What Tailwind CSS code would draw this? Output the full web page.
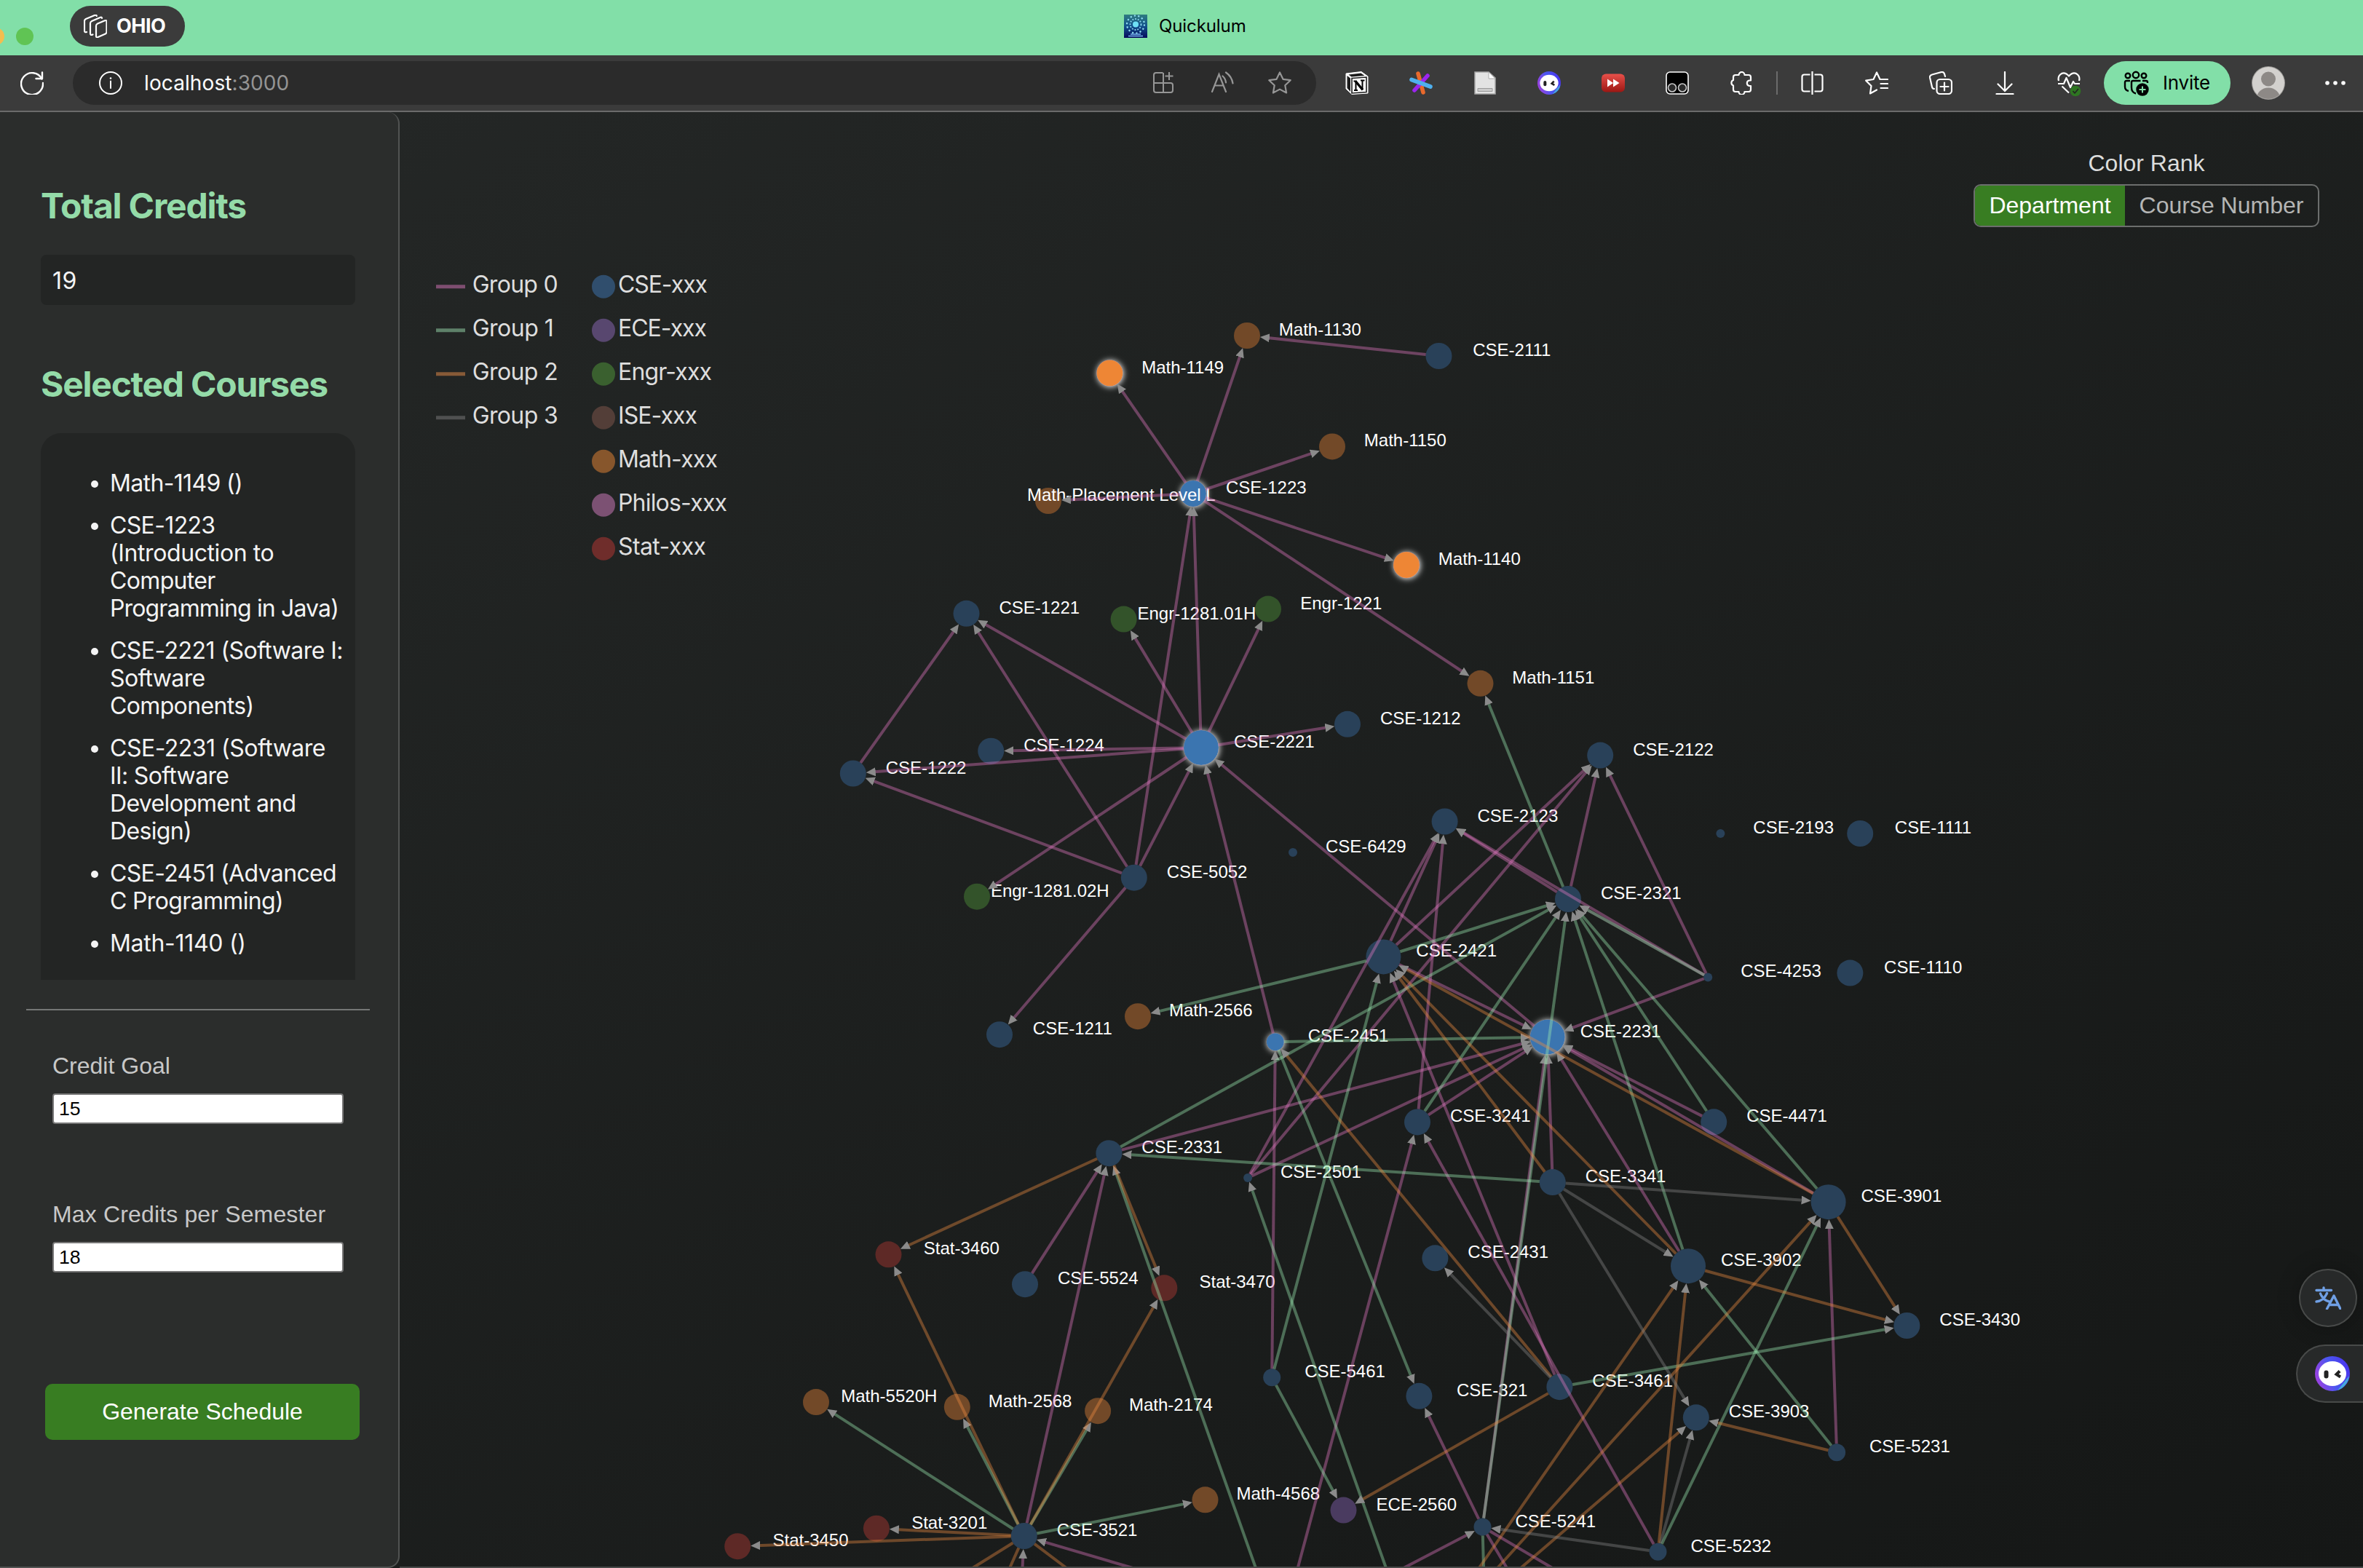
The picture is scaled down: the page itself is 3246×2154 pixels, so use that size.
<!DOCTYPE html>
<html lang="en">
<head>
<meta charset="utf-8">
<title>Quickulum</title>
<script src="https://cdn.jsdelivr.net/npm/@tailwindcss/browser@4"></script>
</head>
<body class="w-[3246px] h-[2154px] overflow-hidden flex flex-col bg-[#1c1d1d] font-['Inter',sans-serif] text-white">

<!-- Title bar -->
<header class="h-[76px] shrink-0 bg-[#82dfa8] flex items-center pb-1 relative">
  <svg class="w-[96px] h-[72px] shrink-0" viewBox="0 0 96 72"><circle cx="-6" cy="50" r="12" fill="#f4bd4f"/><circle cx="34" cy="50" r="12" fill="#60c454"/></svg>
  <div class="w-[158px] h-14 rounded-[28px] bg-[#3b3b3b] flex items-center pl-[19px] gap-[13px]">
    <svg class="w-8 h-8" viewBox="0 0 32 32" fill="none" stroke="#fff" stroke-width="2.2" stroke-linejoin="round" stroke-linecap="round"><path d="M17 15.500q0-2 2-3l10-4.300q2.500-.8 2.500 1.500V24q0 1.500-1.700 2.500L19.500 31Q17 32 17 29.500z"/><path d="M12.500 27.500Q9 29 9 26V12q0-2 2-3l11.500-5q2.300-.9 2.600 1"/><path d="M4 24Q1 25 1 22V9q0-2 2-3L15 1q2.500-1 2.800 1"/></svg>
    <span class="text-[27px] font-bold leading-8 tracking-[-0.5px]">OHIO</span>
  </div>
  <div class="flex items-center gap-4 ml-[1290px] text-black">
    <svg class="w-8 h-8" viewBox="0 0 32 32"><defs><linearGradient id="fav" x1="0" y1="0" x2="0" y2="1"><stop offset="0" stop-color="#2f7d80"/><stop offset=".5" stop-color="#12508c"/><stop offset="1" stop-color="#060a5c"/></linearGradient></defs><rect width="32" height="32" fill="url(#fav)"/><g fill="none" stroke="#8fdcf0"><circle cx="16" cy="13.500" r="12" stroke-width="2.200" stroke-dasharray="2.200 3.200"/><circle cx="16" cy="13.500" r="7.500" stroke-width="1.800" stroke-dasharray="1.800 2"/></g><circle cx="16" cy="13.500" r="4" fill="#6fe0f5"/><path d="M6 29.500h20M9 27h14" stroke="#77b5f0" stroke-width="1.300"/></svg>
    <span class="text-2xl leading-8 tracking-[-0.1px]">Quickulum</span>
  </div>
</header>

<!-- Browser toolbar -->
<nav class="h-[78px] shrink-0 bg-[#3b3b3b] border-b-2 border-[#6b6b6b] flex items-center">
  <svg class="w-8 h-8 ml-7 shrink-0" viewBox="0 0 32 32" fill="none" stroke="#fff" stroke-width="2.400" stroke-linecap="round"><path d="M29.500 10.500A15 15 0 1 0 31 16"/><path d="M30 1.500V10h-8.500" stroke-linejoin="round"/></svg>
  <div class="w-[1708px] h-[60px] ml-10 rounded-[30px] bg-[#2b2b2b] flex items-center pl-9 pr-[34px] shrink-0">
    <svg class="w-8 h-8" viewBox="0 0 32 32" fill="none" stroke="#fff" stroke-width="2"><circle cx="16" cy="16" r="15"/><path d="M16 13.500V23" stroke-linecap="round"/><circle cx="16" cy="9.500" r="1.300" fill="#fff" stroke="none"/></svg>
    <span class="ml-[30px] text-[28px] leading-9 tracking-[0.1px]">localhost<span class="text-[#949494]">:3000</span></span>
    <svg class="w-8 h-8 ml-auto" viewBox="0 0 32 32" fill="none" stroke="#969696" stroke-width="2"><path d="M13.500 2H4a3 3 0 0 0-3 3v21a3 3 0 0 0 3 3h20a3 3 0 0 0 3-3v-7a3 3 0 0 0-3-3H1M14 2v27M22 1v11M16.500 6.500h11"/></svg>
    <svg class="w-8 h-8 ml-12" viewBox="0 0 32 32" fill="none" stroke="#969696" stroke-width="2.200" stroke-linecap="round"><path d="M1 28 10.500 4 20 28M4.500 19.500h12M15.500 6.500q4 3.500 4.500 9M20 1.500q8 5.500 9.500 15"/></svg>
    <svg class="w-8 h-8 ml-[46px]" viewBox="0 0 32 32" fill="none" stroke="#969696" stroke-width="2.200" stroke-linejoin="round"><path d="m16 1.500 4.500 9.300 10.200 1.400-7.400 7.100 1.800 10.200L16 24.600l-9.100 4.900 1.800-10.200L1.300 12.200l10.200-1.400z"/></svg>
  </div>
  <div class="flex items-center gap-14 ml-10 shrink-0">
    <svg class="w-8 h-8" viewBox="0 0 32 32"><path d="M1 3 22 .5l9 6.500v23L9 31.500 1 24z" fill="#fff" stroke="#fff" stroke-linejoin="round"/><path d="M4.500 4.500 21.500 2.500l5 3.500-18 1.500z" fill="#1b1b1b"/><path d="M2.500 6l4.500 3.500V28l-4.500-5z" fill="#1b1b1b"/><path d="M9 9.500 29 8v20.500L9 30z" fill="#fff" stroke="#1b1b1b" stroke-width="1.600"/><path d="M14.500 14v12M23.500 13v12" fill="none" stroke="#000" stroke-width="2"/><path d="M14 13.500 24 25.500" stroke="#000" stroke-width="3.400"/><path d="M11.500 13.500h4M12 26h5M21 12.500h5.500" stroke="#000" stroke-width="1.800"/></svg>
    <svg class="w-8 h-8" viewBox="0 0 32 32" stroke-width="5.600" stroke-linecap="round"><path d="M12 3l7 26" stroke="#e8692c"/><path d="M25 6 7 26" stroke="#9b25f0"/><path d="M3 11.500 29 21" stroke="#4fb0ee"/></svg>
    <svg class="w-8 h-8" viewBox="0 0 32 32"><path d="M2 1h19l9 8v22H2z" fill="#e3e3e3" stroke="#a8a8a8" stroke-width="1.500"/><path d="M21 1v9h9z" fill="#fff" stroke="#aaa"/><path d="M6 23.500h20v4H6z" fill="#ccc" stroke="#9a9a9a"/></svg>
    <svg class="w-8 h-8" viewBox="0 0 48 48"><defs><linearGradient id="bot" x1="0" y1=".7" x2="1" y2=".4"><stop offset="0" stop-color="#a23fe0"/><stop offset=".5" stop-color="#4a57f0"/><stop offset="1" stop-color="#4a35ee"/></linearGradient></defs><circle cx="24" cy="24" r="24" fill="url(#bot)"/><path d="M47 27a24 24 0 0 1-16 20z" fill="#45a9dc"/><ellipse cx="24" cy="24" rx="19" ry="17" fill="#fff"/><rect x="12.500" y="19.500" width="6" height="11" rx="3" fill="#222"/><path d="M34 20.500 29.500 25l5.500 3.500" fill="none" stroke="#222" stroke-width="4"/></svg>
    <svg class="w-8 h-8" viewBox="0 0 32 32"><defs><linearGradient id="red" x1="0" y1="0" x2="0" y2="1"><stop offset="0" stop-color="#e8504a"/><stop offset="1" stop-color="#9c1713"/></linearGradient></defs><rect y="3.500" width="32" height="25" rx="6" fill="url(#red)"/><path d="M8 10.500v11l8-5.500zM16 10.500v11l8.500-5.500z" fill="#fff"/></svg>
    <svg class="w-8 h-8" viewBox="0 0 32 32"><rect x="1" y="1" width="30" height="30" rx="5" fill="#000" stroke="#fff" stroke-width="1.600"/><circle cx="9" cy="22.500" r="5.500" fill="#2b2b2b" stroke="#ccc" stroke-width="1.600"/><circle cx="23" cy="22.500" r="5.500" fill="#2b2b2b" stroke="#ccc" stroke-width="1.600"/></svg>
    <svg class="w-8 h-8" viewBox="0 0 32 32" fill="none" stroke="#fff" stroke-width="2.200" stroke-linejoin="round"><path d="M8 5h4.500a4 4 0 0 1 8 0H26q3 0 3 3v4.500h-2a3.800 3.800 0 0 0 0 7.500h2v5q0 3-3 3h-5.500a4 4 0 0 1-8 0H8q-3 0-3-3v-5.500a4 4 0 0 1 0-7.500V8q0-3 3-3z"/></svg>
  </div>
  <div class="w-0.5 h-8 bg-[#6b6b6b] mx-8 shrink-0"></div>
  <div class="flex items-center gap-14 shrink-0">
    <svg class="w-8 h-8" viewBox="0 0 32 32" fill="none" stroke="#fff" stroke-width="2.200"><path d="M12.500 4.500H4.500q-3 0-3 3v17q0 3 3 3h8M18.500 4.500h8q3 0 3 3v17q0 3-3 3h-8M15.500 0v32"/></svg>
    <svg class="w-8 h-8" viewBox="0 0 32 32" fill="none" stroke="#fff" stroke-width="2.200" stroke-linejoin="round" stroke-linecap="round"><path d="M31 11H20.500L16 1.500 11.500 11 1.200 12.700 8.500 20 7 30.500l9-5M21.500 17H31M21.500 23H31"/></svg>
    <svg class="w-8 h-8" viewBox="0 0 32 32" fill="none" stroke="#fff" stroke-width="2.200" stroke-linecap="round"><rect x="10.500" y="11" width="20.500" height="20" rx="4.500"/><path d="M21 15.500v11M15.500 21h11M22 7l-1-3.500Q20 .5 17 1L4 4.500Q.5 5.500 1 8.500l3 13Q4.500 24 7 24"/></svg>
    <svg class="w-8 h-8" viewBox="0 0 32 32" fill="none" stroke="#fff" stroke-width="2.200" stroke-linecap="round"><path d="M16 1v25M6.500 17.500 16 27l9.500-9.500M4.500 31h23"/></svg>
    <svg class="w-8 h-8 overflow-visible" viewBox="0 0 32 32" fill="none" stroke="#fff" stroke-width="2.200" stroke-linejoin="round"><path d="M2 13Q.5 8 4 4.500q5.500-5 12 2 6.500-7 12-2Q31.500 8 30 13M1 17h8l3.500-8L18 22l4-8 2 3h7M6.500 20.500 16 29.500"/><circle cx="25" cy="27" r="7.300" fill="#2e7621" stroke="none"/><path d="m21.500 27 2.500 3 5-6" stroke="#222" stroke-width="1.600"/></svg>
  </div>
  <div class="ml-8 w-[174px] h-[60px] rounded-[30px] bg-[#82dfa8] text-black flex items-center pl-7 gap-[18px] shrink-0">
    <svg class="w-[35px] h-8 overflow-visible" viewBox="0 0 35 32" fill="none" stroke="#000" stroke-width="2.400"><circle cx="5" cy="6" r="3.300"/><circle cx="16" cy="5" r="4.200"/><circle cx="27" cy="6" r="3.300"/><path d="M8 13H3q-2 0-2 2v6q0 5 5 6M32 16v-1q0-2-2-2h-5M22.500 13H12q-2 0-2 2v7q0 7 6 8.500"/><circle cx="25" cy="25" r="8.700" fill="#000" stroke="none"/><path d="M25 20.500v9M20.500 25h9" stroke="#82dfa8" stroke-width="2"/></svg>
    <span class="text-[26px] leading-9 tracking-[-0.2px]">Invite</span>
  </div>
  <svg class="w-[46px] h-[46px] ml-[29px] shrink-0" viewBox="0 0 46 46"><defs><clipPath id="av"><circle cx="23" cy="23" r="22"/></clipPath></defs><circle cx="23" cy="23" r="23" fill="#9a9895"/><g clip-path="url(#av)"><path d="M0 0h46v46H0z" fill="#d3d1ce"/><circle cx="23" cy="17.500" r="10" fill="#8d8986"/><ellipse cx="23" cy="44" rx="16" ry="14.500" fill="#8d8986"/></g></svg>
  <svg class="w-8 h-8 ml-[53px] shrink-0" viewBox="0 0 32 32" fill="#fff"><circle cx="5" cy="16" r="2.800"/><circle cx="16" cy="16" r="2.800"/><circle cx="27" cy="16" r="2.800"/></svg>
</nav>

<main class="flex-1 flex relative bg-linear-to-br from-[#252827] to-[#151716]">
  <!-- Planning sidebar -->
  <aside class="w-[549px] h-[2000px] shrink-0 bg-[#2b2d2c] border-r-2 border-b-2 border-[#515352] rounded-r-[16px] pt-[101px]">
    <h2 class="ml-14 text-[48px] leading-[56px] font-bold text-[#94dba8] tracking-[-1.2px] whitespace-nowrap">Total Credits</h2>
    <div class="ml-14 mt-[39px] w-[432px] h-[69px] rounded-lg bg-[#232524] flex items-center pl-4 pt-0.5 text-[32px] tracking-[0.4px] text-[#f4f4f4]">19</div>
    <h2 class="ml-14 mt-[81px] text-[48px] leading-[56px] font-bold text-[#94dba8] tracking-[-1.25px] whitespace-nowrap">Selected Courses</h2>
    <ul class="ml-14 mt-[39px] w-[432px] h-[751px] rounded-t-[28px] bg-[#232524] pt-[50px] pl-[95px] flex flex-col gap-5 text-[32px] leading-[38px] tracking-[-0.65px] text-[#f4f4f4] whitespace-nowrap">
      <li class="relative"><i class="absolute -left-[26px] top-[15px] size-[10px] rounded-full bg-[#f4f4f4]"></i>Math-1149 ()</li>
      <li class="relative"><i class="absolute -left-[26px] top-[15px] size-[10px] rounded-full bg-[#f4f4f4]"></i>CSE-1223<br><span class="tracking-[-0.4px]">(Introduction to</span><br>Computer<br><span class="tracking-[-0.85px]">Programming in Java)</span></li>
      <li class="relative"><i class="absolute -left-[26px] top-[15px] size-[10px] rounded-full bg-[#f4f4f4]"></i><span class="tracking-[-0.55px]">CSE-2221 (Software I:</span><br>Software<br>Components)</li>
      <li class="relative"><i class="absolute -left-[26px] top-[15px] size-[10px] rounded-full bg-[#f4f4f4]"></i><span class="tracking-[-0.5px]">CSE-2231 (Software</span><br>II: Software<br>Development and<br>Design)</li>
      <li class="relative"><i class="absolute -left-[26px] top-[15px] size-[10px] rounded-full bg-[#f4f4f4]"></i>CSE-2451 (Advanced<br>C Programming)</li>
      <li class="relative"><i class="absolute -left-[26px] top-[15px] size-[10px] rounded-full bg-[#f4f4f4]"></i><span class="tracking-[-0.3px]">Math-1140 ()</span></li>
    </ul>
    <div class="mt-10 ml-9 w-[472px] h-0.5 bg-[#757776]"></div>
    <div class="ml-[72px] w-[400px] font-['Liberation_Sans',sans-serif]">
      <div class="mt-[58px] text-[32px] leading-9 text-[#c8c8c8]">Credit Goal</div>
      <div class="mt-5 h-[42px] rounded border-2 border-[#767676] bg-white text-black text-[26.67px] leading-[38px] pl-[7px]">15</div>
      <div class="mt-[106px] text-[32px] leading-9 text-[#c8c8c8] tracking-[0.15px] whitespace-nowrap">Max Credits per Semester</div>
      <div class="mt-5 h-[42px] rounded border-2 border-[#767676] bg-white text-black text-[26.67px] leading-[38px] pl-[7px]">18</div>
    </div>
    <div class="mt-[153px] ml-[62px] w-[432px] h-[77px] rounded-[10px] bg-[#387d22] flex items-center justify-center pb-0.5 text-[32px] font-['Liberation_Sans',sans-serif]">Generate Schedule</div>
  </aside>

  <!-- Prerequisite graph -->
  <svg id="graph" class="w-[2697px] h-[2000px] shrink-0" viewBox="549 154 2697 2000">
    <defs>
      <marker id="arrow" markerUnits="userSpaceOnUse" markerWidth="13" markerHeight="12" refX="13" refY="6" orient="auto"><path d="M0 0 13 6 0 12z" fill="#8b8b8b"/></marker>
      <filter id="glow" x="-30%" y="-30%" width="160%" height="160%"><feDropShadow dx="0.800" dy="0.800" stdDeviation="4" flood-color="#fff" flood-opacity="1"/></filter>
    </defs>
    <g id="legend" font-family="Inter, sans-serif" font-size="32" fill="#dedede"></g>
    <g id="nodes"></g>
    <g id="labels" font-family="'Liberation Sans', sans-serif" font-size="24" fill="#fff" text-anchor="middle"></g>
    <g id="links" stroke-width="4" fill="none"></g>
    <path d="M549 2153H3246" stroke="#474948" stroke-width="2"/>
  </svg>

  <!-- Colour rank switch -->
  <div class="absolute top-[52px] right-[60px] w-[475px] flex flex-col items-center gap-[11px] font-['Liberation_Sans',sans-serif] text-[32px]">
    <div class="leading-9 text-[#dcdddc]">Color Rank</div>
    <div class="h-[59px] w-full border-2 border-[#6c6e6d] rounded-[10px] overflow-hidden flex">
      <div class="w-[206px] bg-[#387d22] flex items-center justify-center pb-0.5 text-white">Department</div>
      <div class="flex-1 flex items-center justify-center pb-0.5 text-[#b4b5b4]">Course Number</div>
    </div>
  </div>

  <!-- Floating extension buttons -->
  <div class="absolute left-[3158px] top-[1589px] size-20 rounded-full bg-[#272929] border-2 border-[#484a49] shadow-[0_0_30px_rgba(0,0,0,0.25)] flex items-center justify-center">
    <svg class="w-9 h-8" viewBox="0 0 36 32" fill="none" stroke="#6f9fe4" stroke-width="3.400" stroke-linecap="round" stroke-linejoin="round"><path d="M2 5.500h20.500M12 2v3M7.500 10q3.500 9 12 11M16.500 9.500Q12 20 2 21M16.500 31 26 13l9 18M20 25.500h11.500"/></svg>
  </div>
  <div class="absolute left-[3154px] top-[1693px] w-[92px] h-20 rounded-l-[40px] bg-[#272929] border-2 border-r-0 border-[#484a49] flex items-center pl-6">
    <svg class="size-12" viewBox="0 0 48 48"><circle cx="24" cy="24" r="24" fill="url(#bot)"/><path d="M47 27a24 24 0 0 1-16 20z" fill="#45a9dc"/><ellipse cx="24" cy="24" rx="19" ry="17" fill="#fff"/><rect x="12.500" y="19.500" width="6" height="11" rx="3" fill="#222"/><path d="M34 20.500 29.500 25l5.500 3.500" fill="none" stroke="#222" stroke-width="4"/></svg>
  </div>
</main>

<script>
const NS = 'http://www.w3.org/2000/svg';
function add(parent, tag, attrs, text) {
  const el = document.createElementNS(NS, tag);
  for (const k in attrs) el.setAttribute(k, attrs[k]);
  if (text) el.textContent = text;
  document.getElementById(parent).appendChild(el);
}
const fills = { CSE: '#294159', Math: '#724928', Engr: '#33532a', Stat: '#5e2926', ECE: '#4a3b60' };
const selected = { CSE: '#3a75b0', Math: '#ee8636' };
// name, x, y, radius, selected
const nodes = [
  ['Math-1149',1524.4,512.5,18,1],['Math-1130',1713,461,18],['CSE-2111',1976.5,489,18],['Math-1150',1830,613.4,18],
  ['CSE-1223',1639,678,18,1],['Math-Placement Level L',1440,688,18],['Math-1140',1932,776,18,1],['CSE-1221',1327.5,842.8,18],
  ['Engr-1281.01H',1543.6,850.6,18],['Engr-1221',1742,836.6,18],['Math-1151',2033.5,938.8,18],['CSE-1212',1851,994.8,18],
  ['CSE-2221',1650,1027,24,1],['CSE-1224',1361.2,1031.7,18],['CSE-1222',1171.8,1062.5,18],['CSE-5052',1557.8,1205.7,18],
  ['CSE-6429',1776,1170.9,6],['Engr-1281.02H',1342,1231.7,18],['CSE-2421',1900.4,1314.4,24],['Math-2566',1563,1396.2,18],
  ['CSE-1211',1373,1421.2,18],['CSE-2451',1751.8,1431.2,12,1],['CSE-2331',1523.4,1584.2,18],['CSE-3241',1947,1541.4,18],
  ['CSE-2122',2198.2,1037.6,18],['CSE-2123',1984.6,1128.5,18],['CSE-2193',2363.4,1145,6],['CSE-1111',2555.2,1145,18],
  ['CSE-2321',2154,1235,18],['CSE-4253',2346.2,1342.4,6],['CSE-1110',2541.4,1336.6,18],['CSE-2231',2125.8,1424.6,24,1],
  ['CSE-4471',2354.2,1541.3,18],['CSE-2501',1714.1,1617.9,6],['Stat-3460',1220.5,1723.3,18],['CSE-5524',1408,1764.2,18],
  ['Stat-3470',1599.3,1769.3,18],['CSE-5461',1747.2,1892.3,12],['CSE-321',1949.4,1917.8,18],['Math-5520H',1121,1926.1,18],
  ['Math-2568',1314.8,1932.8,18],['Math-2174',1508.1,1938.2,18],['Math-4568',1655.5,2060.3,18],['ECE-2560',1845.5,2074.6,18],
  ['CSE-3521',1406.7,2110,18],['Stat-3201',1203.9,2099.7,18],['Stat-3450',1013.2,2124.2,18],['CSE-3341',2132.8,1624.1,18],
  ['CSE-3901',2511.6,1651.2,24],['CSE-2431',1971.4,1728.3,18],['CSE-3902',2319,1739.2,24],['CSE-3430',2619.4,1821,18],
  ['CSE-3461',2142.4,1905.2,18],['CSE-3903',2329.8,1947.3,18],['CSE-5231',2523.1,1995.2,12],['CSE-5241',2036.5,2097.5,12],
  ['CSE-5232',2277.5,2131.7,12]
];
const at = {};
for (const [name, x, y, r, sel] of nodes) {
  const dept = name.split('-')[0];
  at[name.replace('CSE-', '')] = { x, y, r };
  const a = { cx: x, cy: y, r, fill: sel ? selected[dept] : fills[dept] };
  if (sel) a.filter = 'url(#glow)';
  add('nodes', 'circle', a);
  add('labels', 'text', { x: x + 100.3, y }, name);
}
// prerequisites lying below the visible part of the canvas: point where each link leaves it
const off = { a:[1725,2154], b:[1904,2154], c:[1782.7,2154], d:[1336,2154], e:[1387,2154], f:[1465,2154], g:[1556,2154], h:[1404.5,2154],
  i:[2031.8,2154], j:[2057,2154], k:[2089,2154], l:[1928,2154], m:[2038,2154], n:[2070,2154], o:[2132.5,2154] };
for (const k in off) at['@' + k] = { x: off[k][0], y: off[k][1], r: 0 };
const linkColors = ['#e377c2', '#9beab1', '#ee8b40', '#878787'];
const links = [
  ['1223>Math-1149','1223>Math-1130','1223>Math-1150','1223>Math-Placement Level L','1223>Math-1140','1223>Math-1151','2111>Math-1130',
   '2221>1223','5052>1223','2221>1221','5052>1221','1222>1221','2221>Engr-1281.01H','2221>Engr-1221','2221>1212','2221>1224','2221>1222',
   '5052>1222','5052>2221','2221>Engr-1281.02H','2451>2221','2231>2221','5052>1211','2501>2123','2421>2123','3241>2123','2321>2123','4253>2123',
   '2421>2122','2501>2122','2321>2122','4253>2122','2421>2231','4253>2231','2331>2231','2501>2231','3241>2231','3341>2231','3902>2231','3901>2231',
   '4471>2231','5241>2231','3461>2421','5461>2451','5524>2331','3521>2331','@c>3241','5232>3241','@g>3521','@h>3521','5231>3901','5241>321',
   '@l>5241','5241>@n','5241>@o'],
  ['5461>2421','2421>2321','2421>Math-2566','2331>2321','3241>2321','5241>2321','3902>2321','4471>2321','3901>2321','4253>2321','2321>Math-1151',
   '2451>2231','2451>321','3341>2331','@a>2331','@b>2501','5461>ECE-2560','3521>Math-2568','3521>Math-2174','3521>Math-5520H','3521>Math-4568',
   '3461>3430','5231>3902','5232>3901','5241>@m'],
  ['3901>2421','3341>2421','3902>2421','3461>2451','2331>Stat-3460','2331>Stat-3470','3461>ECE-2560','3521>Stat-3460','3521>Stat-3470',
   '3521>Stat-3201','3521>Stat-3450','3521>@d','3521>@e','3521>@f','3901>3430','3902>3430','5231>3903','5232>3902','@i>3902','@j>3901','@k>3903'],
  ['3341>3901','3341>3902','3341>3903','3461>2431','5232>3903','5232>5241','4253>2321']
];
links.forEach((group, g) => group.forEach(l => {
  const [s, t] = l.split('>').map(k => at[k]);
  const len = Math.hypot(t.x - s.x, t.y - s.y), ux = (t.x - s.x) / len, uy = (t.y - s.y) / len;
  const x1 = s.x + ux * s.r, y1 = s.y + uy * s.r, x2 = t.x - ux * t.r, y2 = t.y - uy * t.r;
  const back = t.r ? 8 : 0;
  add('links', 'path', { d: `M${x1} ${y1}L${x2 - ux * back} ${y2 - uy * back}`, stroke: linkColors[g], 'stroke-opacity': .4 });
  if (t.r) add('links', 'path', { d: `M${x1} ${y1}L${x2} ${y2}`, 'marker-end': 'url(#arrow)' });
}));
['#7e4e70', '#5e8169', '#875a37', '#4f5050'].forEach((c, i) => {
  const y = 393.7 + i * 60;
  add('legend', 'path', { d: `M599 ${y}H639`, stroke: c, 'stroke-width': 5 });
  add('legend', 'text', { x: 648.7, y: y + 8.6, textLength: i == 1 ? 112 : 118 }, 'Group ' + i);
});
[['CSE','#304e6d',123],['ECE','#58476f',122],['Engr','#3a602f',129],['ISE','#533e38',109],['Math','#87562c',137],['Philos','#7c5173',150],['Stat','#6f2d2b',121]]
  .forEach(([n, c, w], i) => {
    const y = 393.7 + i * 60;
    add('legend', 'circle', { cx: 829, cy: y, r: 16, fill: c });
    add('legend', 'text', { x: 849, y: y + 8.6, textLength: w }, n + '-xxx');
  });
</script>
</body>
</html>
